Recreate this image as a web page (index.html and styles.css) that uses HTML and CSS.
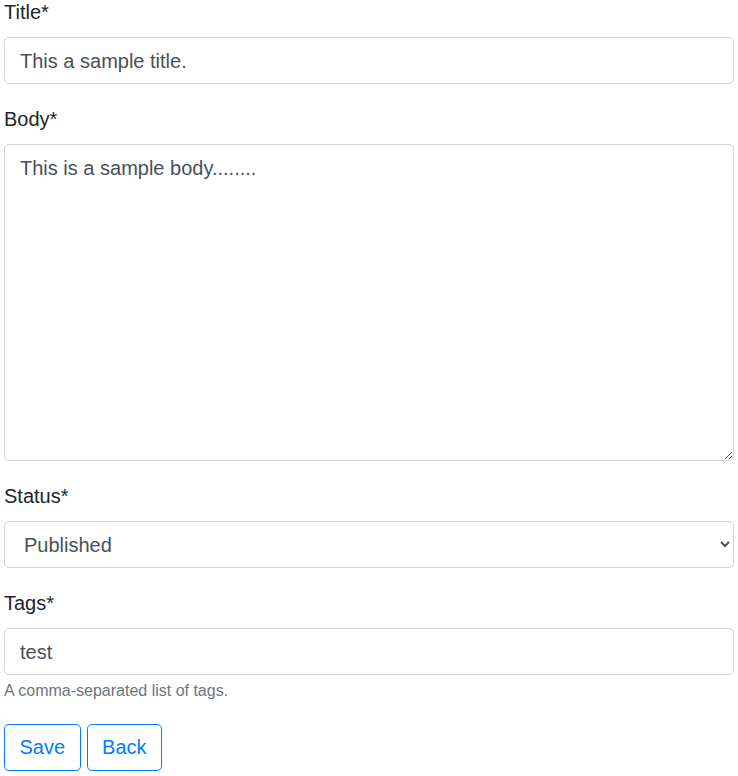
FILE: index.html
```html
<!DOCTYPE html>
<html lang="en">
<head>
<meta charset="utf-8">
<title>Edit post</title>
<link rel="stylesheet" href="styles.css">
</head>
<body>
<form class="form">
  <div class="group">
    <label class="label" for="title">Title*</label>
    <input class="control" id="title" type="text" value="This a sample title.">
  </div>
  <div class="group">
    <label class="label" for="body">Body*</label>
    <textarea class="control area" id="body">This is a sample body........</textarea>
  </div>
  <div class="group">
    <label class="label" for="status">Status*</label>
    <select class="control select" id="status">
      <option>Draft</option>
      <option selected>Published</option>
    </select>
  </div>
  <div class="group last">
    <label class="label" for="tags">Tags*</label>
    <input class="control" id="tags" type="text" value="test">
    <small class="help">A comma-separated list of tags.</small>
  </div>
  <div class="actions">
    <button class="btn" type="submit">Save</button>
    <button class="btn" type="button">Back</button>
  </div>
</form>
</body>
</html>
```

FILE: styles.css
```css
* { box-sizing: border-box; }
html, body { margin: 0; padding: 0; background: #fff; }
body {
  font-family: "Liberation Sans", Arial, sans-serif;
  color: #212529;
  padding: 0 4px;
}
.form { display: flex; flex-direction: column; }
.group { display: flex; flex-direction: column; margin-bottom: 23px; }
.group.last { margin-bottom: 21px; }
.label {
  font-size: 20px;
  line-height: 24px;
  margin-bottom: 13px;
  color: #212529;
}
.control {
  display: block;
  width: 100%;
  height: 47px;
  padding: 1px 15px 0;
  font-family: "Liberation Sans", Arial, sans-serif;
  font-size: 20px;
  line-height: 30px;
  color: #495057;
  background: #fff;
  border: 1px solid #ced4da;
  border-radius: 4.8px;
  margin: 0;
  outline: none;
}
.area {
  height: 317px;
  padding: 8px 15px;
  resize: vertical;
}
.select {
  padding: 1px 12px 0 15px;
}
.help {
  display: block;
  margin-top: 4px;
  font-size: 16px;
  line-height: 24px;
  color: #6c757d;
}
.actions { display: flex; gap: 6px; }
.btn {
  font-family: "Liberation Sans", Arial, sans-serif;
  font-size: 20px;
  line-height: 29px;
  padding: 8px 14.5px;
  color: #007bff;
  background: transparent;
  border: 1px solid #007bff;
  border-radius: 4.8px;
  cursor: pointer;
}
```
